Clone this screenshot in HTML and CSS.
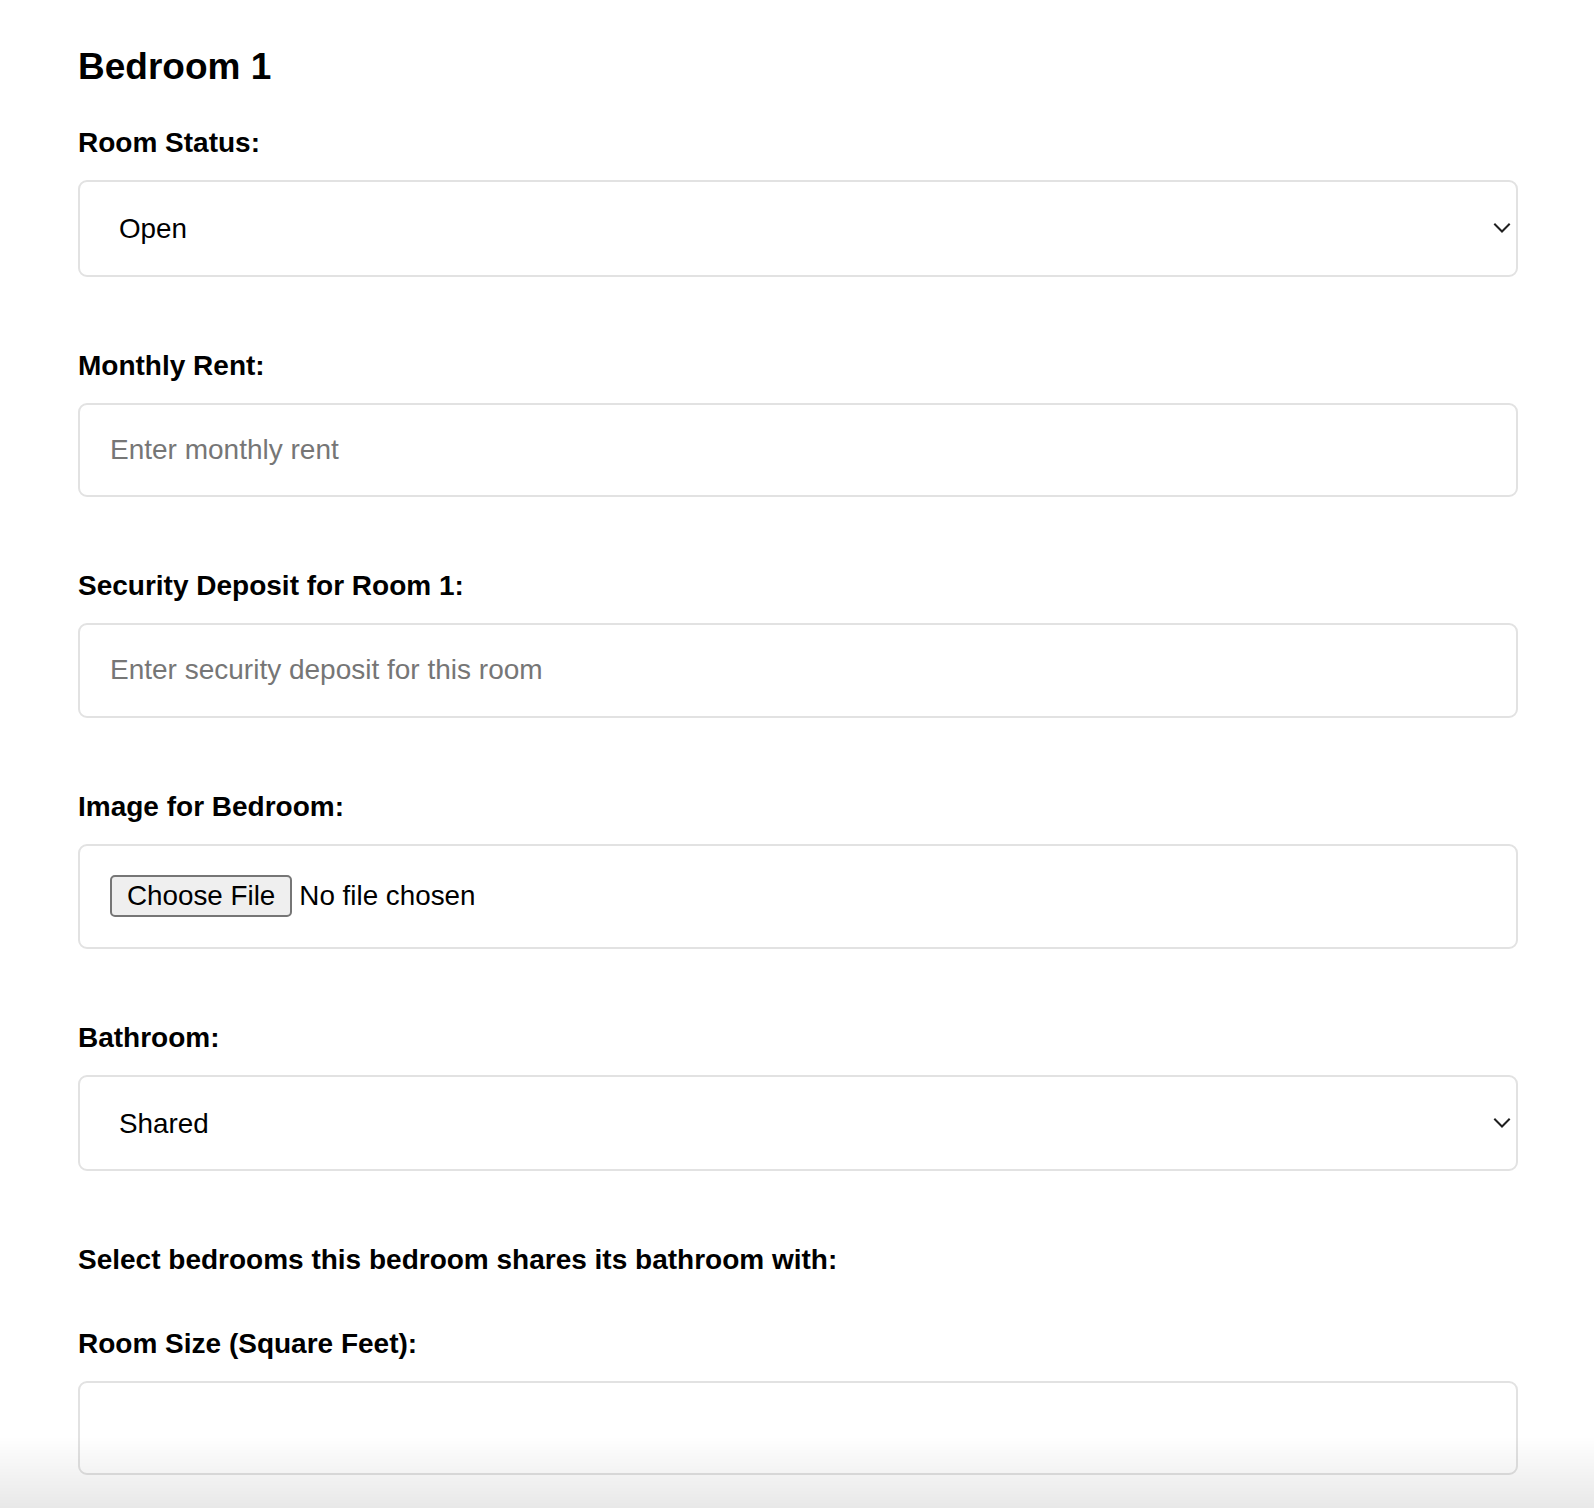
FILE: index.html
```html
<!DOCTYPE html>
<html lang="en">
<head>
<meta charset="utf-8">
<title>Bedroom 1</title>
<link rel="stylesheet" href="styles.css">
</head>
<body>
<div class="page">
  <h3 class="title">Bedroom 1</h3>

  <div class="field">
    <label class="label" for="status">Room Status:</label>
    <div class="select-wrap">
      <select id="status" class="control select">
        <option>Open</option>
        <option>Occupied</option>
      </select>
      <svg class="chevron" width="18" height="11" viewBox="0 0 18 11" aria-hidden="true"><path d="M1.3 1.3 L9 9 L16.7 1.3"/></svg>
    </div>
  </div>

  <div class="field">
    <label class="label" for="rent">Monthly Rent:</label>
    <input id="rent" class="control text" type="text" placeholder="Enter monthly rent">
  </div>

  <div class="field">
    <label class="label" for="deposit">Security Deposit for Room 1:</label>
    <input id="deposit" class="control text" type="text" placeholder="Enter security deposit for this room">
  </div>

  <div class="field">
    <label class="label" for="image">Image for Bedroom:</label>
    <div class="file-box">
      <input id="image" class="file" type="file">
    </div>
  </div>

  <div class="field">
    <label class="label" for="bath">Bathroom:</label>
    <div class="select-wrap">
      <select id="bath" class="control select">
        <option>Shared</option>
        <option>Private</option>
      </select>
      <svg class="chevron" width="18" height="11" viewBox="0 0 18 11" aria-hidden="true"><path d="M1.3 1.3 L9 9 L16.7 1.3"/></svg>
    </div>
  </div>

  <div class="field field-shared">
    <div class="label">Select bedrooms this bedroom shares its bathroom with:</div>
    <div class="shared-list"></div>
  </div>

  <div class="field">
    <label class="label" for="size">Room Size (Square Feet):</label>
    <input id="size" class="control text" type="text">
  </div>
</div>
<div class="bottom-fade"></div>
</body>
</html>
```

FILE: styles.css
```css
html, body {
  margin: 0;
  padding: 0;
  background: #ffffff;
}

body {
  font-family: "Liberation Sans", Arial, Helvetica, sans-serif;
  color: #000000;
}

.page {
  width: 1440px;
  margin-left: 78px;
  padding-top: 45px;
}

.title {
  margin: 0 0 39px 0;
  font-size: 37px;
  line-height: 43px;
  font-weight: 700;
}

.field {
  margin-bottom: 73px;
}

.label {
  display: block;
  font-size: 28px;
  line-height: 32px;
  font-weight: 700;
  margin-bottom: 21px;
}

.control {
  display: block;
  box-sizing: border-box;
  width: 100%;
  margin: 0;
  border: 2px solid #e2e2e2;
  border-radius: 9px;
  background: #ffffff;
  font-family: "Liberation Sans", Arial, Helvetica, sans-serif;
  color: #000000;
  outline: none;
}

.text {
  height: 94.5px;
  padding: 0 30px;
  font-size: 28px;
}

.text::placeholder {
  color: #767676;
  opacity: 1;
}

.select-wrap {
  position: relative;
}

.select {
  appearance: none;
  -webkit-appearance: none;
  height: 96.6px;
  padding: 0 40px 0 39px;
  font-size: 27.8px;
}

.chevron {
  position: absolute;
  right: 7px;
  top: 50%;
  transform: translateY(-50%);
  pointer-events: none;
}

.chevron path {
  fill: none;
  stroke: #1f1f1f;
  stroke-width: 2;
}

.file-box {
  box-sizing: border-box;
  height: 105.2px;
  display: flex;
  align-items: center;
  padding: 0 30px;
  border: 2px solid #e2e2e2;
  border-radius: 9px;
  background: #ffffff;
}

.file {
  font-family: "Liberation Sans", Arial, Helvetica, sans-serif;
  font-size: 27.8px;
  color: #000000;
}

.file::file-selector-button {
  font: inherit;
  color: #000000;
  box-sizing: border-box;
  height: 42px;
  line-height: 30px;
  padding: 3px 15px;
  margin: 0 7px 0 0;
  border: 2px solid #767676;
  border-radius: 5px;
  background: #efefef;
}

.field-shared {
  margin-bottom: 51.5px;
}

.field-shared .label {
  margin-bottom: 0;
}

.bottom-fade {
  position: fixed;
  left: 0;
  right: 0;
  bottom: 0;
  height: 72px;
  background: linear-gradient(to bottom, rgba(0, 0, 0, 0), rgba(0, 0, 0, 0.09));
  pointer-events: none;
}
```
